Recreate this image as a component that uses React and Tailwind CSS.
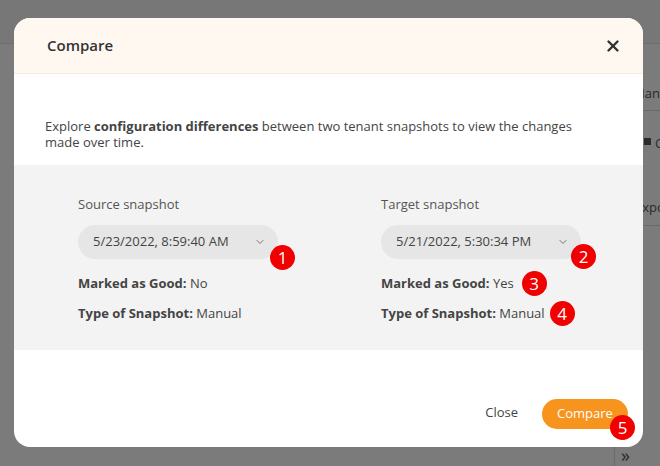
import { ChevronDown, X } from 'lucide-react';

const font = { fontFamily: '"Open Sans", "Noto Sans", Arial, sans-serif' };

const Marker = ({ n, className }) => (
  <span
    className={`absolute flex items-center justify-center w-[25px] h-[25px] rounded-full bg-[#f00000] text-white text-[17px] leading-none ${className}`}
  >
    {n}
  </span>
);

const SnapshotColumn = ({ label, value, good, type, markers }) => (
  <div className="flex flex-col">
    <div className="text-[13px] text-[#555] leading-[18px]">{label}</div>
    <div className="relative mt-[12px] w-[200px]">
      <div className="flex items-center justify-between h-[34px] rounded-full bg-[#e6e6e6] pl-[15px] pr-[12px] text-[13px] text-[#444]">
        <span>{value}</span>
        <ChevronDown size={12} className="text-[#777]" />
      </div>
      {markers.select}
    </div>
    <div className="relative mt-[15px] text-[13px] text-[#444] leading-[18px] w-fit">
      <span className="font-bold">Marked as Good:</span> {good}
      {markers.good}
    </div>
    <div className="relative mt-[12px] text-[13px] text-[#444] leading-[18px] w-fit">
      <span className="font-bold">Type of Snapshot:</span> {type}
      {markers.type}
    </div>
  </div>
);

export default function App() {
  return (
    <div className="relative w-[660px] h-[466px] overflow-hidden bg-[#7b7b7b]" style={font}>
      {/* background app behind the overlay */}
      <div className="h-[44px] bg-[#777] border-b border-[#6e6e6e]" />
      <div className="absolute left-[633px] top-[84px] text-[13px] text-[#2a2a2a]">Man</div>
      <div className="absolute left-[630px] top-[110px] w-[30px] h-px bg-[#6a6a6a]" />
      <div className="absolute left-[644px] top-[138px] w-[7px] h-[7px] bg-[#2a2a2a]" />
      <div className="absolute left-[655px] top-[134px] text-[13px] text-[#2a2a2a]">C</div>
      <div className="absolute left-[635px] top-[198px] text-[13px] text-[#2a2a2a]">Expo</div>
      <div className="absolute left-[630px] top-[225px] w-[30px] h-px bg-[#6a6a6a]" />
      <div className="absolute left-[614px] top-[447px] w-px h-[19px] bg-[#6a6a6a]" />
      <div className="absolute left-[621px] top-[446px] text-[18px] leading-[18px] text-[#2a2a2a]">»</div>

      {/* modal */}
      <div className="absolute left-[14px] top-[18px] w-[629px] h-[429px] bg-white rounded-[16px] flex flex-col">
        <div className="h-[56px] flex items-center justify-between pl-[33px] pr-[21px] bg-[#fff8f1] rounded-t-[16px] border-b border-[#f3ede6]">
          <span className="text-[15px] text-[#333] font-semibold">Compare</span>
          <X size={18} strokeWidth={3.2} className="text-[#333]" />
        </div>

        <div className="pt-[44px] pl-[31px] pr-[50px] pb-[15px] text-[13px] leading-[16px] text-[#444]">
          Explore <span className="font-bold">configuration differences</span> between two tenant snapshots to view the changes made over time.
        </div>

        <div className="bg-[#f3f3f3] h-[185px] pl-[64px] pt-[30px] grid grid-cols-[303px_1fr]">
          <SnapshotColumn
            label="Source snapshot"
            value="5/23/2022, 8:59:40 AM"
            good="No"
            type="Manual"
            markers={{ select: <Marker n="1" className="left-[192px] top-[20px]" /> }}
          />
          <SnapshotColumn
            label="Target snapshot"
            value="5/21/2022, 5:30:34 PM"
            good="Yes"
            type="Manual"
            markers={{
              select: <Marker n="2" className="left-[190px] top-[19px]" />,
              good: <Marker n="3" className="left-[calc(100%+8px)] top-[-3px]" />,
              type: <Marker n="4" className="left-[calc(100%+5px)] top-[-3px]" />,
            }}
          />
        </div>

        <div className="flex-1 flex items-end justify-end gap-[24px] pr-[15px] pb-[18px]">
          <span className="text-[13px] text-[#444] mb-[7px]">Close</span>
          <div className="relative">
            <div className="h-[30px] w-[86px] rounded-full bg-[#f7941d] text-white text-[13px] flex items-center justify-center">
              Compare
            </div>
            <Marker n="5" className="left-[68px] top-[16px]" />
          </div>
        </div>
      </div>
    </div>
  );
}
